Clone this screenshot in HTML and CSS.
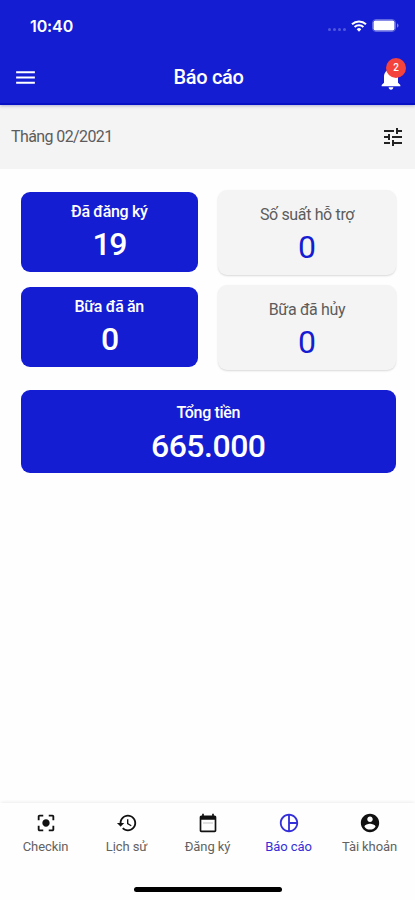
FILE: index.html
```html
<!DOCTYPE html>
<html lang="vi">
<head>
<meta charset="utf-8">
<meta name="viewport" content="width=device-width, initial-scale=1">
<title>Báo cáo</title>
<link rel="stylesheet" href="styles.css">
</head>
<body>
<div class="app">
  <header class="header">
    <div class="status">
      <span class="time">10:40</span>
      <div class="indicators">
        <span class="signal"><i></i><i></i><i></i><i></i></span>
        <svg class="wifi" viewBox="0 0 16 12"><path d="M1 4.2a10.2 10.2 0 0 1 14 0M3.6 6.9a6.4 6.4 0 0 1 8.8 0" fill="none" stroke="#fff" stroke-width="2"/><path d="M5.7 9.2a3.3 3.3 0 0 1 4.6 0L8 11.7z" fill="#fff"/></svg>
        <svg class="battery" viewBox="0 0 27 13"><rect x=".5" y=".5" width="23" height="12" rx="3.5" fill="none" stroke="#6168e0"/><rect x="1.500" y="1.500" width="21" height="10" rx="2" fill="#fff"/><path d="M25 4.5v4c1-.4 1.5-1.200 1.500-2s-.5-1.600-1.500-2z" fill="#7d83e8"/></svg>
      </div>
    </div>
    <div class="toolbar">
      <svg class="icon menu" viewBox="0 0 24 24"><path d="M3 18h18v-2H3v2zm0-5h18v-2H3v2zm0-7v2h18V6H3z"/></svg>
      <h1 class="title">Báo cáo</h1>
      <div class="bell">
        <svg class="icon" viewBox="0 0 24 24"><path d="M12 22c1.100 0 2-.9 2-2h-4c0 1.100.89 2 2 2zm6-6v-5c0-3.070-1.640-5.640-4.500-6.320V4c0-.83-.67-1.500-1.500-1.500s-1.500.67-1.500 1.500v.68C7.630 5.360 6 7.920 6 11v5l-2 2v1h16v-1l-2-2z"/></svg>
        <span class="badge">2</span>
      </div>
    </div>
  </header>
  <div class="filter">
    <span class="month">Tháng 02/2021</span>
    <svg class="icon" viewBox="0 0 24 24"><path d="M3 17v2h6v-2H3zM3 5v2h10V5H3zm10 16v-2h8v-2h-8v-2h-2v6h2zM7 9v2H3v2h4v2h2V9H7zm14 4v-2H11v2h10zm-6-4h2V7h4V5h-4V3h-2v6z"/></svg>
  </div>
  <main class="stats">
    <section class="card blue"><span class="label">Đã đăng ký</span><strong class="value">19</strong></section>
    <section class="card grey"><span class="label">Số suất hỗ trợ</span><strong class="value">0</strong></section>
    <section class="card blue"><span class="label">Bữa đã ăn</span><strong class="value">0</strong></section>
    <section class="card grey"><span class="label">Bữa đã hủy</span><strong class="value">0</strong></section>
    <section class="card blue total"><span class="label">Tổng tiền</span><strong class="value">665.000</strong></section>
  </main>
  <nav class="tabs">
    <a class="tab"><svg class="icon" viewBox="0 0 24 24"><path d="M12 8c-2.210 0-4 1.790-4 4s1.790 4 4 4 4-1.790 4-4-1.790-4-4-4zm-7 7H3v4c0 1.100.9 2 2 2h4v-2H5v-4zM5 5h4V3H5c-1.100 0-2 .9-2 2v4h2V5zm14-2h-4v2h4v4h2V5c0-1.100-.9-2-2-2zm0 16h-4v2h4c1.100 0 2-.9 2-2v-4h-2v4z"/></svg><span>Checkin</span></a>
    <a class="tab"><svg class="icon" viewBox="0 0 24 24"><path d="M13 3c-4.970 0-9 4.030-9 9H1l3.890 3.890.07.14L9 12H6c0-3.870 3.130-7 7-7s7 3.130 7 7-3.130 7-7 7c-1.930 0-3.680-.79-4.940-2.060l-1.420 1.420C8.270 19.990 10.510 21 13 21c4.970 0 9-4.030 9-9s-4.030-9-9-9zm-1 5v5l4.280 2.540.72-1.210-3.500-2.080V8H12z"/></svg><span>Lịch sử</span></a>
    <a class="tab"><svg class="icon calendar" viewBox="0 0 24 24"><path d="M20 3h-1V1h-2v2H7V1H5v2H4c-1.100 0-2 .9-2 2v16c0 1.100.9 2 2 2h16c1.100 0 2-.9 2-2V5c0-1.100-.9-2-2-2zm0 18H4V8h16v13z"/><path d="M6 11.500h12v1H6z" opacity=".3"/></svg><span>Đăng ký</span></a>
    <a class="tab active"><svg class="icon" viewBox="0 0 24 24"><path d="M12 2C6.480 2 2 6.480 2 12s4.480 10 10 10 10-4.480 10-10S17.520 2 12 2zm1 2.070c3.610.45 6.480 3.330 6.930 6.930H13V4.070zM4 12c0-4.060 3.070-7.440 7-7.930v15.870c-3.930-.5-7-3.880-7-7.940zm9 7.930V13h6.930c-.45 3.610-3.320 6.480-6.930 6.930z"/></svg><span>Báo cáo</span></a>
    <a class="tab"><svg class="icon" viewBox="0 0 24 24"><path d="M12 2C6.480 2 2 6.480 2 12s4.480 10 10 10 10-4.480 10-10S17.520 2 12 2zm0 3c1.660 0 3 1.340 3 3s-1.340 3-3 3-3-1.340-3-3 1.340-3 3-3zm0 14.200c-2.500 0-4.710-1.280-6-3.220.03-1.990 4-3.080 6-3.080 1.990 0 5.970 1.090 6 3.080-1.290 1.940-3.500 3.220-6 3.220z"/></svg><span>Tài khoản</span></a>
  </nav>
  <div class="home"></div>
</div>
</body>
</html>
```
FILE: styles.css
```css
* { box-sizing: border-box; }
body { margin: 0; background: #fefefe; font-family: Roboto, sans-serif; }
.app { width: 415px; height: 900px; display: flex; flex-direction: column; overflow: hidden; }
.icon { display: block; width: 24px; height: 24px; fill: currentColor; flex: none; }

.header { height: 105px; flex: none; background: #141dd2; color: #fff; border-bottom: 2px solid #0710c4; box-shadow: 0 1px 3px #6b6bb080; z-index: 1; }
.status { height: 51px; padding: 0 16px 0 30px; display: flex; justify-content: space-between; align-items: center; }
.time { font: 600 16px/20px Inter, sans-serif; letter-spacing: -.1px; }
.indicators { display: flex; align-items: center; }
.signal { display: flex; gap: 2px; margin: 8px 5px 0 0; }
.signal i { width: 3px; height: 3px; border-radius: 50%; background: #5057df; }
.wifi { width: 16px; height: 12px; margin-right: 5px; }
.battery { width: 27px; height: 13px; }
.toolbar { height: 52px; padding: 0 11px 0 13px; display: grid; grid-template-columns: 27px 1fr 27px; align-items: center; }
.menu { width: 25px; height: 25px; }
.title { margin: 0; text-align: center; font-size: 20px; line-height: 24px; font-weight: 500; letter-spacing: -.3px; }
.bell { position: relative; }
.bell .icon { width: 28px; height: 28px; margin-top: 2px; }
.badge { position: absolute; left: 9px; top: -4px; width: 20px; height: 20px; border-radius: 50%; background: #f4433c; font-size: 10px; line-height: 20px; font-weight: 500; text-align: center; }

.filter { height: 64px; flex: none; padding: 0 10px 0 11px; display: flex; align-items: center; justify-content: space-between; background: #f4f4f4; color: #222; }
.month { font-size: 16px; line-height: 20px; letter-spacing: -.6px; color: #5c5c5c; }

.stats { padding: 21px 19px 0 20.500px; display: grid; grid-template-columns: 177.500px 178px; grid-template-rows: 85px 85px 83px; row-gap: 10px; column-gap: 20px; }
.card { display: flex; flex-direction: column; align-items: center; border-radius: 9px; }
.blue { height: 80px; margin-top: 2px; padding-top: 10px; background: #141dd2; color: #fff; }
.grey { padding-top: 15px; background: #f4f4f4; color: #5c5c5c; box-shadow: 0 1px 2px #00000026; }
.label { font-size: 16px; line-height: 20px; letter-spacing: -.35px; white-space: nowrap; }
.blue .label { font-weight: 500; }
.value { margin-top: 5px; font-size: 32px; line-height: 34px; font-weight: 500; letter-spacing: -1.500px; }
.grey .value { font-weight: 400; color: #141dd2; letter-spacing: 0; }
.total { grid-column: 1 / 3; height: 83px; margin-top: 10px; padding-top: 13px; }
.total .value { margin-top: 6px; letter-spacing: -.5px; }

.tabs { height: 66px; margin-top: auto; padding: 8px 5px 0; display: grid; grid-template-columns: repeat(5, 81px); box-shadow: 0 -2px 3px -1px #00000012; color: #111; }
.tab { display: flex; flex-direction: column; align-items: center; }
.tab .icon { width: 22px; height: 22px; margin-top: 1px; }
.tab .calendar { width: 20px; height: 20px; margin: 2px 0 1px; }
.tab span { margin-top: 5px; font-size: 13px; line-height: 16px; letter-spacing: -.1px; color: #626262; white-space: nowrap; }
.tab.active, .tab.active span { color: #342fd8; }
.home { width: 148px; height: 5px; flex: none; margin: 18px auto 8px; border-radius: 3px; background: #000; }
```
